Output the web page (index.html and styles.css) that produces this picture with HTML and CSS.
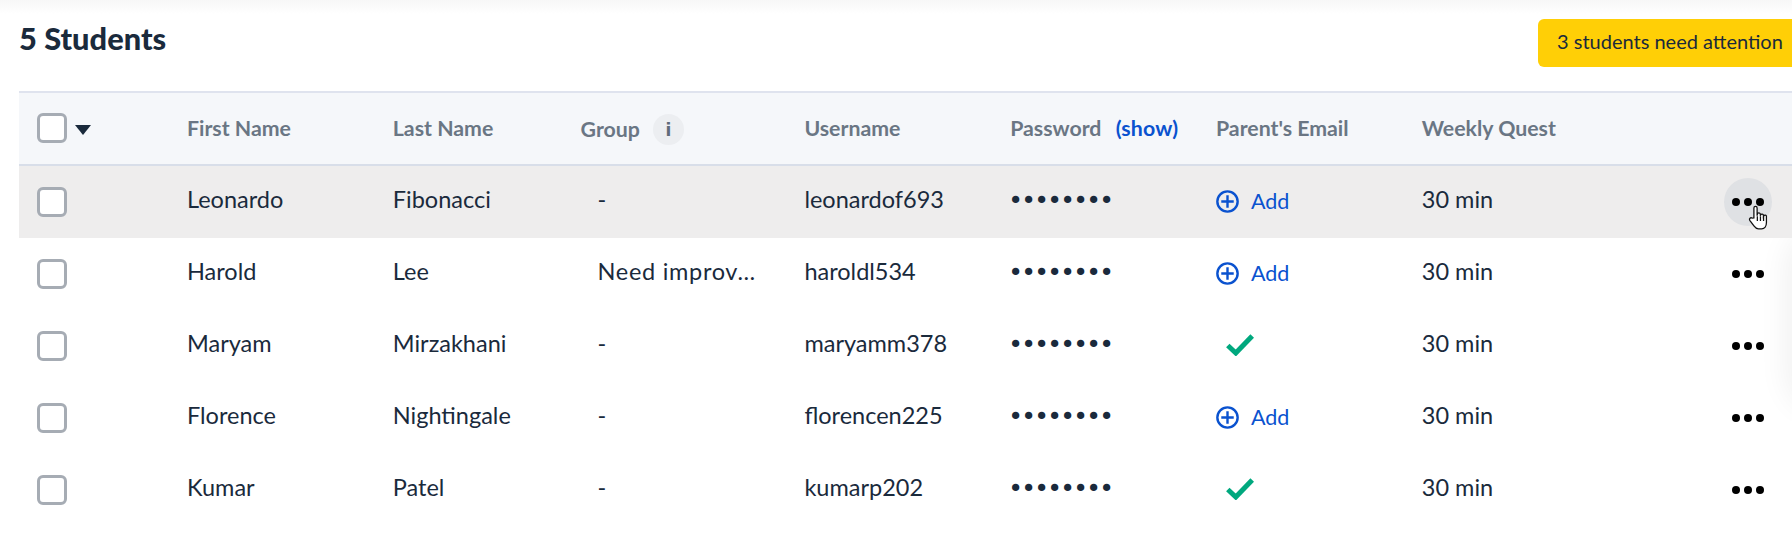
FILE: index.html
```html
<!DOCTYPE html>
<html lang="en">
<head>
<meta charset="utf-8">
<title>Students</title>
<link rel="stylesheet" href="styles.css">
</head>
<body>
<div class="topfade"></div>
<div class="edge-shadow"></div>
<main class="page">
  <div class="titlebar">
    <h1 class="title">5 Students</h1>
    <button class="attention">3 students need attention</button>
  </div>
  <div class="table">
    <div class="row head">
      <div class="sel"><span class="box"></span><span class="caret"></span></div>
      <div>First Name</div>
      <div>Last Name</div>
      <div class="group-head">Group <span class="info">i</span></div>
      <div>Username</div>
      <div>Password <a class="show">(show)</a></div>
      <div>Parent's Email</div>
      <div>Weekly Quest</div>
      <div></div>
    </div>
    <div class="row hover">
      <div class="sel"><span class="box"></span></div>
      <div>Leonardo</div><div>Fibonacci</div><div class="grp">-</div><div>leonardof693</div>
      <div class="dots">••••••••</div>
      <div class="add"><svg class="plus" viewBox="0 0 24 24"><circle cx="12" cy="12" r="10.6"/><path d="M12 5.5v13M5.5 12h13"/></svg>Add</div>
      <div>30 min</div>
      <div class="menu"><span class="more on"><i></i><i></i><i></i></span>
        <svg class="cursor" viewBox="0 0 20 24"><path d="M6 12V3.2a1.4 1.4 0 0 1 2.8 0V10l.2-1.2a1.3 1.3 0 0 1 2.6.2v1l.2-.6a1.3 1.3 0 0 1 2.5.4v1l.2-.3a1.2 1.2 0 0 1 2.4.4V16c0 3-1.6 5.5-4.2 5.5H10c-1.8 0-2.8-1-3.8-2.4L2.4 14a1.4 1.4 0 0 1 2-1.9z"/><path d="M9 10.5v4M11.7 10.5v4M14.4 11v3.5"/></svg>
      </div>
    </div>
    <div class="row">
      <div class="sel"><span class="box"></span></div>
      <div>Harold</div><div>Lee</div><div class="grp"><span class="clip">Need improv…</span></div><div>haroldl534</div>
      <div class="dots">••••••••</div>
      <div class="add"><svg class="plus" viewBox="0 0 24 24"><circle cx="12" cy="12" r="10.6"/><path d="M12 5.5v13M5.5 12h13"/></svg>Add</div>
      <div>30 min</div>
      <div class="menu"><span class="more"><i></i><i></i><i></i></span></div>
    </div>
    <div class="row">
      <div class="sel"><span class="box"></span></div>
      <div>Maryam</div><div>Mirzakhani</div><div class="grp">-</div><div>maryamm378</div>
      <div class="dots">••••••••</div>
      <div class="ok"><svg class="check" viewBox="0 0 28 22"><path d="M1.8 11.5l8 7.5L26.2 2"/></svg></div>
      <div>30 min</div>
      <div class="menu"><span class="more"><i></i><i></i><i></i></span></div>
    </div>
    <div class="row">
      <div class="sel"><span class="box"></span></div>
      <div>Florence</div><div>Nightingale</div><div class="grp">-</div><div>florencen225</div>
      <div class="dots">••••••••</div>
      <div class="add"><svg class="plus" viewBox="0 0 24 24"><circle cx="12" cy="12" r="10.6"/><path d="M12 5.5v13M5.5 12h13"/></svg>Add</div>
      <div>30 min</div>
      <div class="menu"><span class="more"><i></i><i></i><i></i></span></div>
    </div>
    <div class="row">
      <div class="sel"><span class="box"></span></div>
      <div>Kumar</div><div>Patel</div><div class="grp">-</div><div>kumarp202</div>
      <div class="dots">••••••••</div>
      <div class="ok"><svg class="check" viewBox="0 0 28 22"><path d="M1.8 11.5l8 7.5L26.2 2"/></svg></div>
      <div>30 min</div>
      <div class="menu"><span class="more"><i></i><i></i><i></i></span></div>
    </div>
  </div>
</main>
</body>
</html>
```
FILE: styles.css
```css
* { box-sizing: border-box; }
html, body { margin: 0; height: 541px; overflow: hidden; background: #fff; }
body { font-family: "Lato", "Liberation Sans", sans-serif; color: #1a2a3c; }
.topfade { position: absolute; left: 0; right: 0; top: 0; height: 14px; background: linear-gradient(#f7f7f7, #fff); }
.edge-shadow { position: absolute; right: -60px; top: 235px; width: 60px; height: 170px; border-radius: 30px; box-shadow: 0 0 30px 6px rgba(0,0,0,.06); }
.page { position: relative; padding-left: 19px; }
.titlebar { display: flex; justify-content: space-between; align-items: flex-start; height: 91px; padding-top: 18px; }
.title { margin: 0; font-size: 30.8px; line-height: 42px; font-weight: 900; color: #1a2a3c; }
.attention { width: 254px; height: 48px; margin-top: 1px; padding: 0 0 5px 19px; border: 0; border-radius: 6px 0 0 6px; background: #ffcf06; color: #1a2a3c; font: 400 20px "Lato", sans-serif; text-align: left; }
.row { display: grid; grid-template-columns: 168px repeat(7, 205.8px) 1fr; align-items: center; height: 72px; font-size: 23.5px; }
.row > div { padding-bottom: 6px; }
.head { height: 75px; background: #f5f7fa; border-top: 2px solid #dfe3ee; border-bottom: 2px solid #d8dee9; font-size: 21.3px; font-weight: 700; color: #6a7684; }
.row.head > div { padding-bottom: 2px; }
.hover { background: #eeeded; }
.row > .sel { display: flex; align-items: center; padding: 0 0 0 18px; }
.box { width: 30px; height: 30px; border: 3px solid #a6acb4; border-radius: 6px; background: #fff; }
.caret { width: 0; height: 0; margin: 4px 0 0 8px; border-left: 8.5px solid transparent; border-right: 8.5px solid transparent; border-top: 10px solid #1a2a3c; }
.row.head > .group-head { display: flex; align-items: center; gap: 13px; margin-left: -18px; padding-bottom: 0; line-height: 28px; }
.info { display: flex; align-items: center; justify-content: center; width: 31px; height: 31px; margin-top: 2px; border-radius: 50%; background: #eceef1; font-family: "DejaVu Sans", sans-serif; font-size: 17px; font-weight: 700; color: #5f6b79; }
.show { margin-left: 9px; color: #0a52cf; letter-spacing: .2px; }
.grp { min-width: 0; margin-left: -1px; }
.clip { display: block; white-space: nowrap; letter-spacing: .7px; }
.row > .dots { font-family: "DejaVu Sans", sans-serif; font-size: 25px; letter-spacing: -1.75px; margin-left: -2px; padding-bottom: 4px; }
.row > .add { display: flex; align-items: center; gap: 12px; padding-bottom: 2px; color: #0a52cf; font-size: 21.5px; }
.plus { width: 23px; height: 23px; fill: none; stroke: #0a52cf; stroke-width: 2.5; }
.row > .ok { display: flex; padding: 0 0 3px 10px; }
.check { width: 28px; height: 22px; fill: none; stroke: #00a87e; stroke-width: 5; }
.row > .menu { position: relative; display: flex; padding-bottom: 1px; }
.more { display: flex; align-items: center; justify-content: center; gap: 4px; width: 48px; height: 48px; margin-left: 96px; border-radius: 50%; }
.more.on { background: #dfe1e4; }
.more i { width: 8px; height: 8px; border-radius: 50%; background: #000; }
.cursor { position: absolute; left: 119px; top: 26px; width: 23px; height: 28px; fill: #fff; stroke: #111; stroke-width: 1.1; }
```
